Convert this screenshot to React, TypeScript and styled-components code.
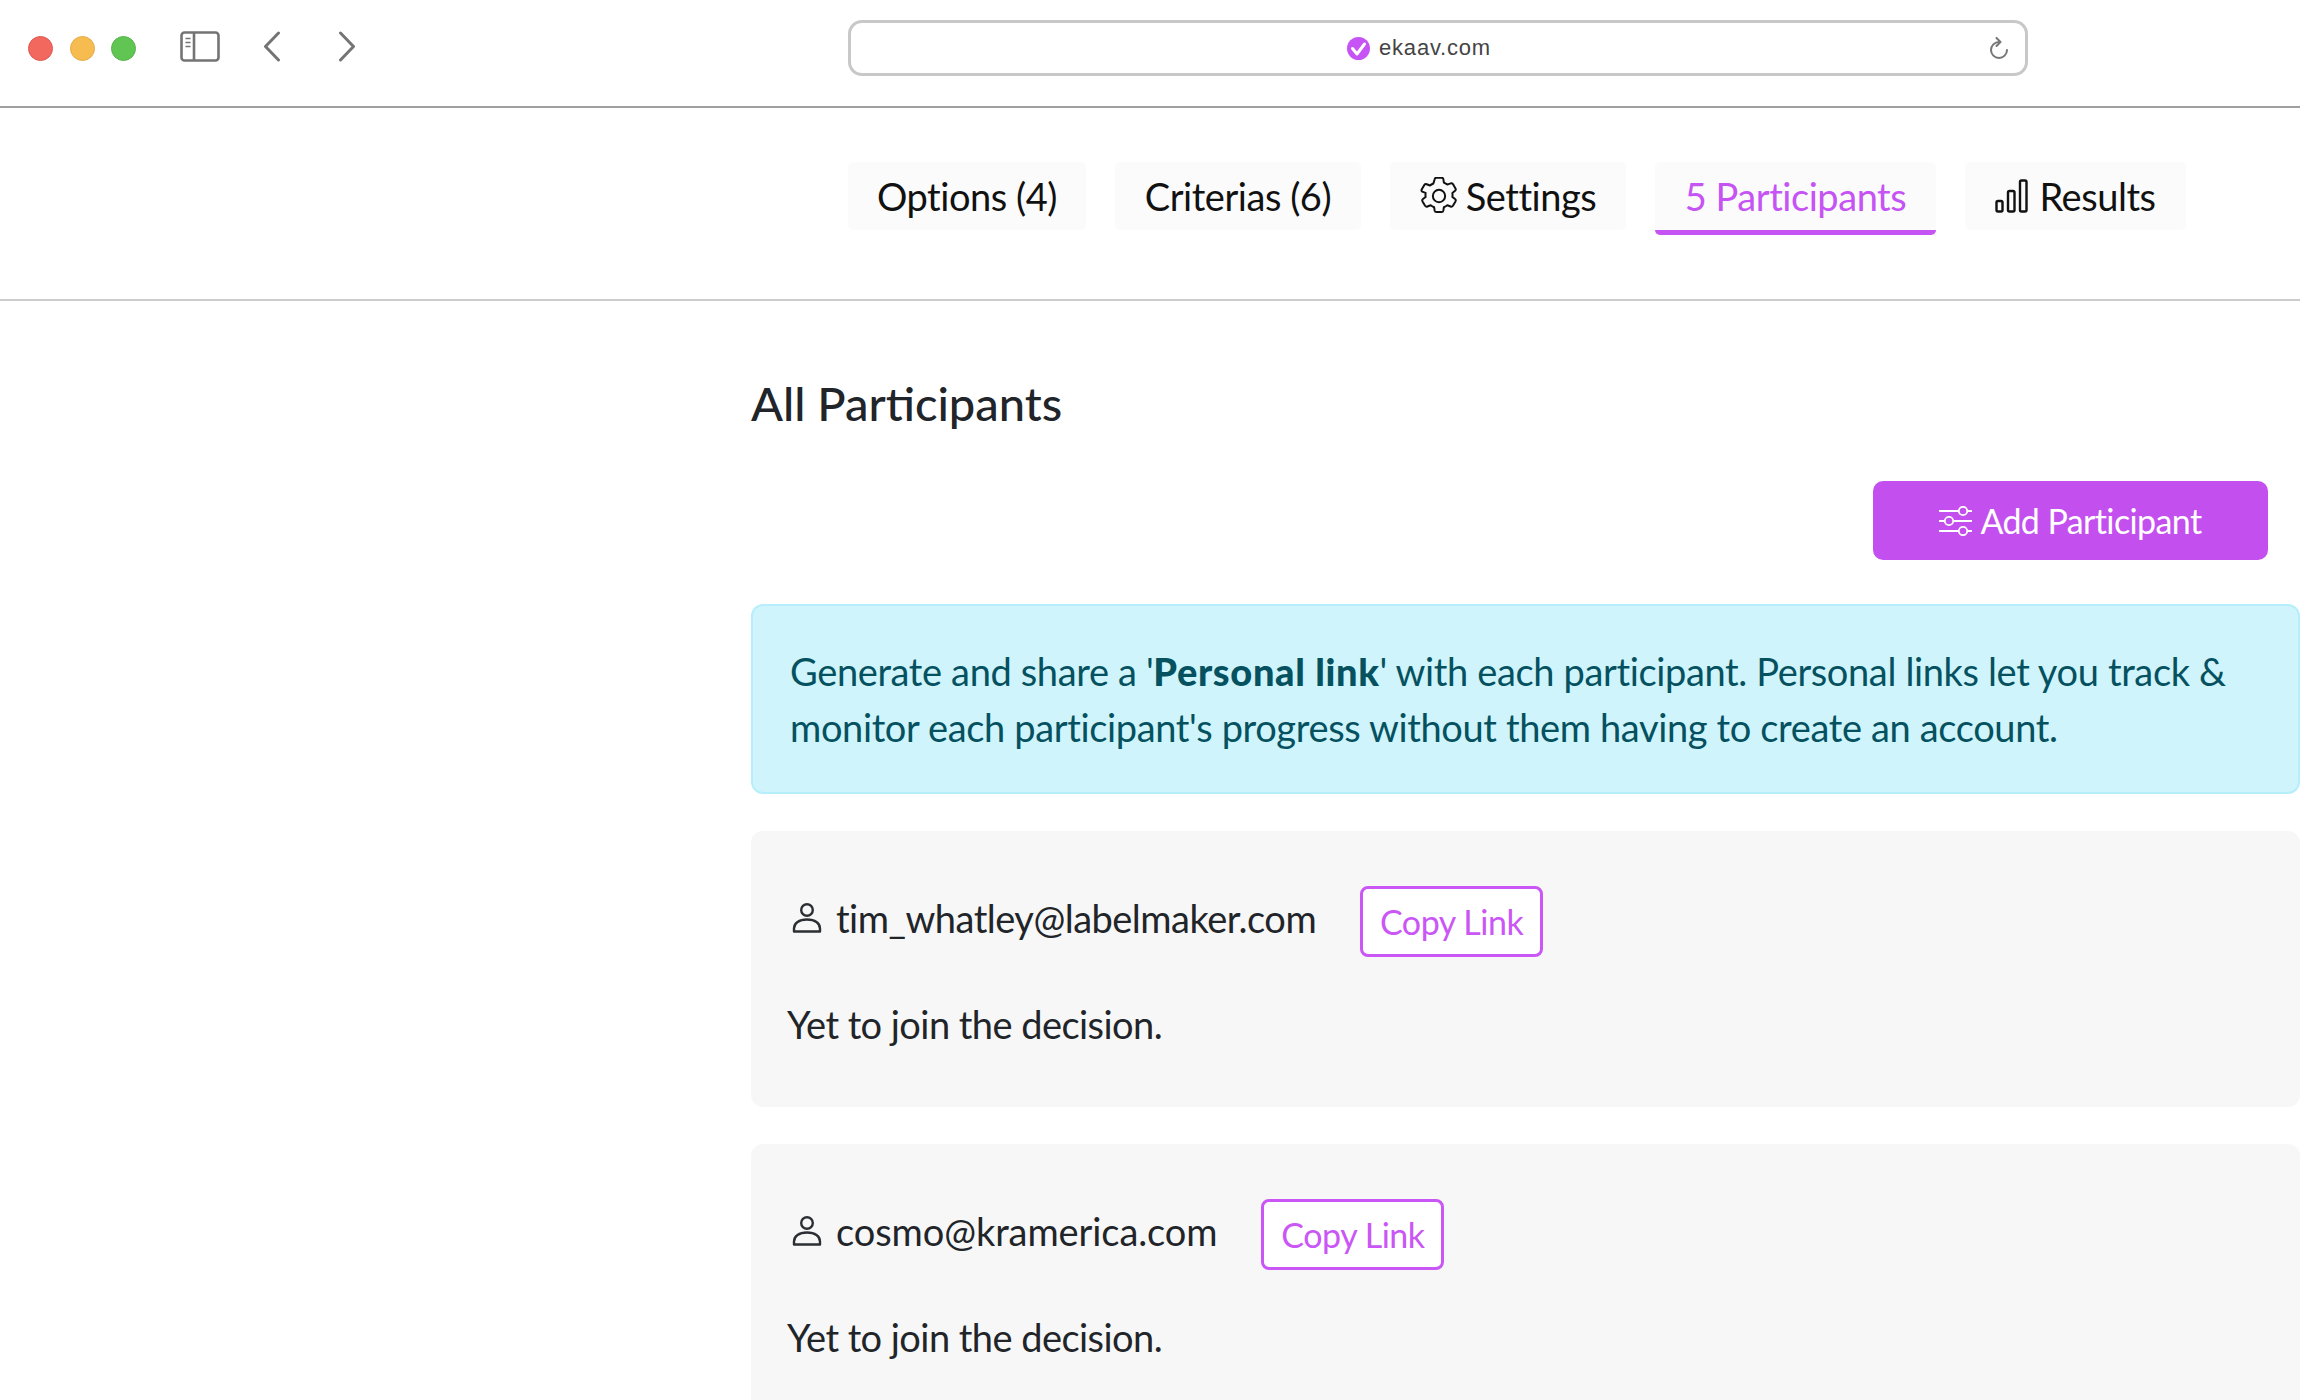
import React from 'react';
import styled, { createGlobalStyle } from 'styled-components';

const Global = createGlobalStyle`
  html, body { margin: 0; padding: 0; background: #fff; height: 1400px; overflow: hidden; }
  * { box-sizing: border-box; }
  body { font-family: Lato, "Open Sans", sans-serif; color: #212529; }
`;
const Page = styled.div`
  width: 2300px;
  height: 1400px;
  overflow: hidden;
`;
const BrowserBar = styled.header`
  height: 108px;
  border-bottom: 2px solid #a0a0a0;
  display: flex;
  align-items: center;
  padding: 0 0 10px 28px;
`;
const Lights = styled.div`
  display: flex;
  gap: 16.5px;
`;
const Light = styled.span<{ $fill: string; $edge: string }>`
  width: 25px;
  height: 25px;
  border-radius: 50%;
  background: ${p => p.$fill};
  border: 1px solid ${p => p.$edge};
`;
const NavIcons = styled.div`
  display: flex;
  align-items: center;
  margin-left: 44px;
  margin-top: -3px;
`;
const NavIcon = styled.svg<{ $ml?: number }>`
  display: block;
  margin-left: ${p => p.$ml ?? 0}px;
  fill: none;
  stroke: #747474;
`;
const UrlBar = styled.div`
  margin-left: 492px;
  width: 1180px;
  height: 56px;
  border: 3px solid #c8c8c8;
  border-radius: 14px;
  display: flex;
  align-items: center;
  justify-content: center;
  position: relative;
  font-family: "Liberation Sans", sans-serif;
  font-size: 22px;
  color: #444;
  gap: 9px;
  padding: 0 38px 0 0;
  letter-spacing: 0.8px;
`;
const Reload = styled.svg`
  position: absolute;
  right: 17px;
  top: 14px;
  fill: none;
  stroke: #777;
`;
const Tabs = styled.nav`
  height: 193px;
  border-bottom: 2px solid #cccccc;
  padding: 54px 0 0 848px;
  display: flex;
  align-items: flex-start;
  gap: 29px;
`;
const Tab = styled.div<{ $active?: boolean; $w: number; $gap?: number }>`
  width: ${p => p.$w}px;
  height: ${p => (p.$active ? 73 : 68)}px;
  background: #fbfbfb;
  border-radius: 5px;
  display: flex;
  align-items: center;
  justify-content: center;
  gap: ${p => p.$gap ?? 8}px;
  font-size: 38px;
  letter-spacing: -0.45px;
  color: ${p => (p.$active ? '#c653f3' : '#111')};
  border-bottom: ${p => (p.$active ? '5px solid #c653f3' : 'none')};
  white-space: nowrap;
`;
const TabIcon = styled.svg`
  fill: none;
  stroke: #111;
  flex: none;
`;
const Main = styled.main`
  padding: 0 0 0 751px;
`;
const Title = styled.h1`
  margin: 74px 0 0;
  font-size: 47px;
  line-height: 56px;
  font-weight: 500;
  color: #212529;
`;
const ActionRow = styled.div`
  display: flex;
  justify-content: flex-end;
  padding-right: 32px;
  margin-top: 50px;
`;
const AddButton = styled.button`
  width: 395px;
  height: 79px;
  border: none;
  border-radius: 10px;
  background: #c44fef;
  color: #fff;
  font: 400 34px Lato, sans-serif;
  letter-spacing: -0.6px;
  display: flex;
  align-items: center;
  justify-content: center;
  gap: 8px;
`;
const Alert = styled.div`
  margin-top: 44px;
  height: 190px;
  border: 2px solid #b6effb;
  border-radius: 12px;
  background: #cff4fc;
  color: #055160;
  padding: 37px 37px;
  font-size: 38px;
  line-height: 56px;
  letter-spacing: -0.36px;
  b { font-weight: 900; letter-spacing: 0.64px; }
`;
const Card = styled.section`
  background: #f7f7f7;
  border-radius: 12px;
  padding: 55px 36px 0;
  height: 276px;
  margin-top: 37px;
`;
const CardHead = styled.div`
  display: flex;
  align-items: center;
  height: 71px;
`;
const UserIcon = styled.svg`
  fill: none;
  stroke: #2b2f33;
  margin: 0 14px 8px 5px;
  flex: none;
`;
const Email = styled.span<{ $tight: number }>`
  font-size: 38px;
  letter-spacing: ${p => p.$tight}px;
  color: #212529;
  margin-bottom: 8px;
`;
const CopyButton = styled.button`
  margin-left: 44px;
  width: 183px;
  height: 71px;
  background: #fff;
  border: 3px solid #c956f5;
  border-radius: 8px;
  color: #c956f5;
  font: 400 34px Lato, sans-serif;
  letter-spacing: -0.45px;
`;
const Status = styled.p`
  margin: 42px 0 0;
  font-size: 38px;
  line-height: 50px;
  letter-spacing: -0.55px;
  color: #212529;
`;

const User = () => (
  <UserIcon width="30" height="30" viewBox="0 0 30 30" strokeWidth="2.4">
    <circle cx="15" cy="7" r="5.8" />
    <path d="M2 28.5h26v-3c0-5.5-5-9-13-9s-13 3.500-13 9z" strokeLinejoin="round" />
  </UserIcon>
);

const Participant = ({ email, tight }: { email: string; tight: number }) => (
  <Card>
    <CardHead>
      <User />
      <Email $tight={tight}>{email}</Email>
      <CopyButton>Copy Link</CopyButton>
    </CardHead>
    <Status>Yet to join the decision.</Status>
  </Card>
);

export default function App() {
  return (
    <Page>
      <Global />
      <BrowserBar>
        <Lights>
          <Light $fill="#f2685e" $edge="#dc5850" />
          <Light $fill="#f6bc50" $edge="#e5ab48" />
          <Light $fill="#61c554" $edge="#55b54a" />
        </Lights>
        <NavIcons>
          <NavIcon width="40" height="31" viewBox="0 0 40 31" strokeWidth="2.6">
            <rect x="1.500" y="1.500" width="37" height="28" rx="3" />
            <path d="M14 1.500v28" />
            <path d="M5.500 7.500h5M5.500 11.500h5M5.500 15.500h5" strokeWidth="1.600" />
          </NavIcon>
          <NavIcon $ml={43} width="18" height="31" viewBox="0 0 18 31" strokeWidth="3" strokeLinecap="round" strokeLinejoin="round">
            <path d="M15.500 2 2.500 15.500 15.500 29" />
          </NavIcon>
          <NavIcon $ml={57} width="18" height="31" viewBox="0 0 18 31" strokeWidth="3" strokeLinecap="round" strokeLinejoin="round">
            <path d="M2.500 2 15.500 15.500 2.500 29" />
          </NavIcon>
        </NavIcons>
        <UrlBar>
          <svg width="23" height="23" viewBox="0 0 23 23">
            <circle cx="11.500" cy="11.500" r="11.500" fill="#c653f3" />
            <path d="M5.500 11.500l4.500 5.500 7.500-10" fill="none" stroke="#fff" strokeWidth="3" strokeLinejoin="round" strokeLinecap="round" />
          </svg>
          ekaav.com
          <Reload width="18" height="22" viewBox="0 0 18 22" strokeWidth="2">
            <path d="M9 5A8 8 0 1 0 17 13" strokeLinecap="round" />
            <path d="M6.500 1l4 4-4 4" strokeLinecap="round" strokeLinejoin="round" />
          </Reload>
        </UrlBar>
      </BrowserBar>
      <Tabs>
        <Tab $w={238}>Options (4)</Tab>
        <Tab $w={246}>Criterias (6)</Tab>
        <Tab $w={236}>
          <TabIcon width="38" height="38" viewBox="1.500 1.500 21 21" strokeWidth="1.100" strokeLinejoin="round">
            <path d="M9.600 2.700c.1-.5.500-.8 1-.8h2.800c.5 0 .9.300 1 .8l.3 1.900c.7.300 1.300.6 1.900 1.100l1.800-.7c.5-.2 1 0 1.300.4l1.400 2.400c.2.400.2 1-.2 1.300l-1.500 1.200c.1.700.1 1.500 0 2.200l1.500 1.200c.4.300.4.900.2 1.300l-1.400 2.400c-.3.400-.8.600-1.300.4l-1.800-.7c-.6.500-1.200.8-1.900 1.100l-.3 1.900c-.1.500-.5.800-1 .8h-2.800c-.5 0-.9-.3-1-.8l-.3-1.900c-.7-.3-1.300-.6-1.900-1.100l-1.800.7c-.5.200-1 0-1.300-.4l-1.400-2.400c-.2-.4-.2-1 .2-1.300l1.500-1.200c-.1-.7-.1-1.500 0-2.200L2.700 9.600c-.4-.3-.4-.9-.2-1.300l1.400-2.400c.3-.4.800-.6 1.300-.4l1.800.7c.6-.5 1.200-.8 1.900-1.100z" />
            <circle cx="12" cy="12" r="3.400" />
          </TabIcon>
          Settings
        </Tab>
        <Tab $w={281} $active>5 Participants</Tab>
        <Tab $w={221} $gap={10}>
          <TabIcon width="34" height="34" viewBox="0 0 34 34" strokeWidth="2.400">
            <rect x="1.500" y="22" width="6" height="10.500" rx="1.500" />
            <rect x="13" y="12" width="6.500" height="20.500" rx="1.500" />
            <rect x="25" y="1.500" width="6.500" height="31" rx="1.500" />
          </TabIcon>
          Results
        </Tab>
      </Tabs>
      <Main>
        <Title>All Participants</Title>
        <ActionRow>
          <AddButton>
            <svg width="33" height="30" viewBox="0 0 33 30" fill="none" stroke="#fff" strokeWidth="1.800">
              <path d="M0 5h19M29 5h4M0 15h5M15 15h18M0 25h19M29 25h4" />
              <circle cx="24" cy="5" r="4.200" />
              <circle cx="10" cy="15" r="4.200" />
              <circle cx="24" cy="25" r="4.200" />
            </svg>
            Add Participant
          </AddButton>
        </ActionRow>
        <Alert>
          Generate and share a '<b>Personal link</b>' with each participant. Personal links let you track &amp; monitor each participant's progress without them having to create an account.
        </Alert>
        <Participant email="tim_whatley@labelmaker.com" tight={-0.5} />
        <Participant email="cosmo@kramerica.com" tight={-0.08} />
      </Main>
    </Page>
  );
}
